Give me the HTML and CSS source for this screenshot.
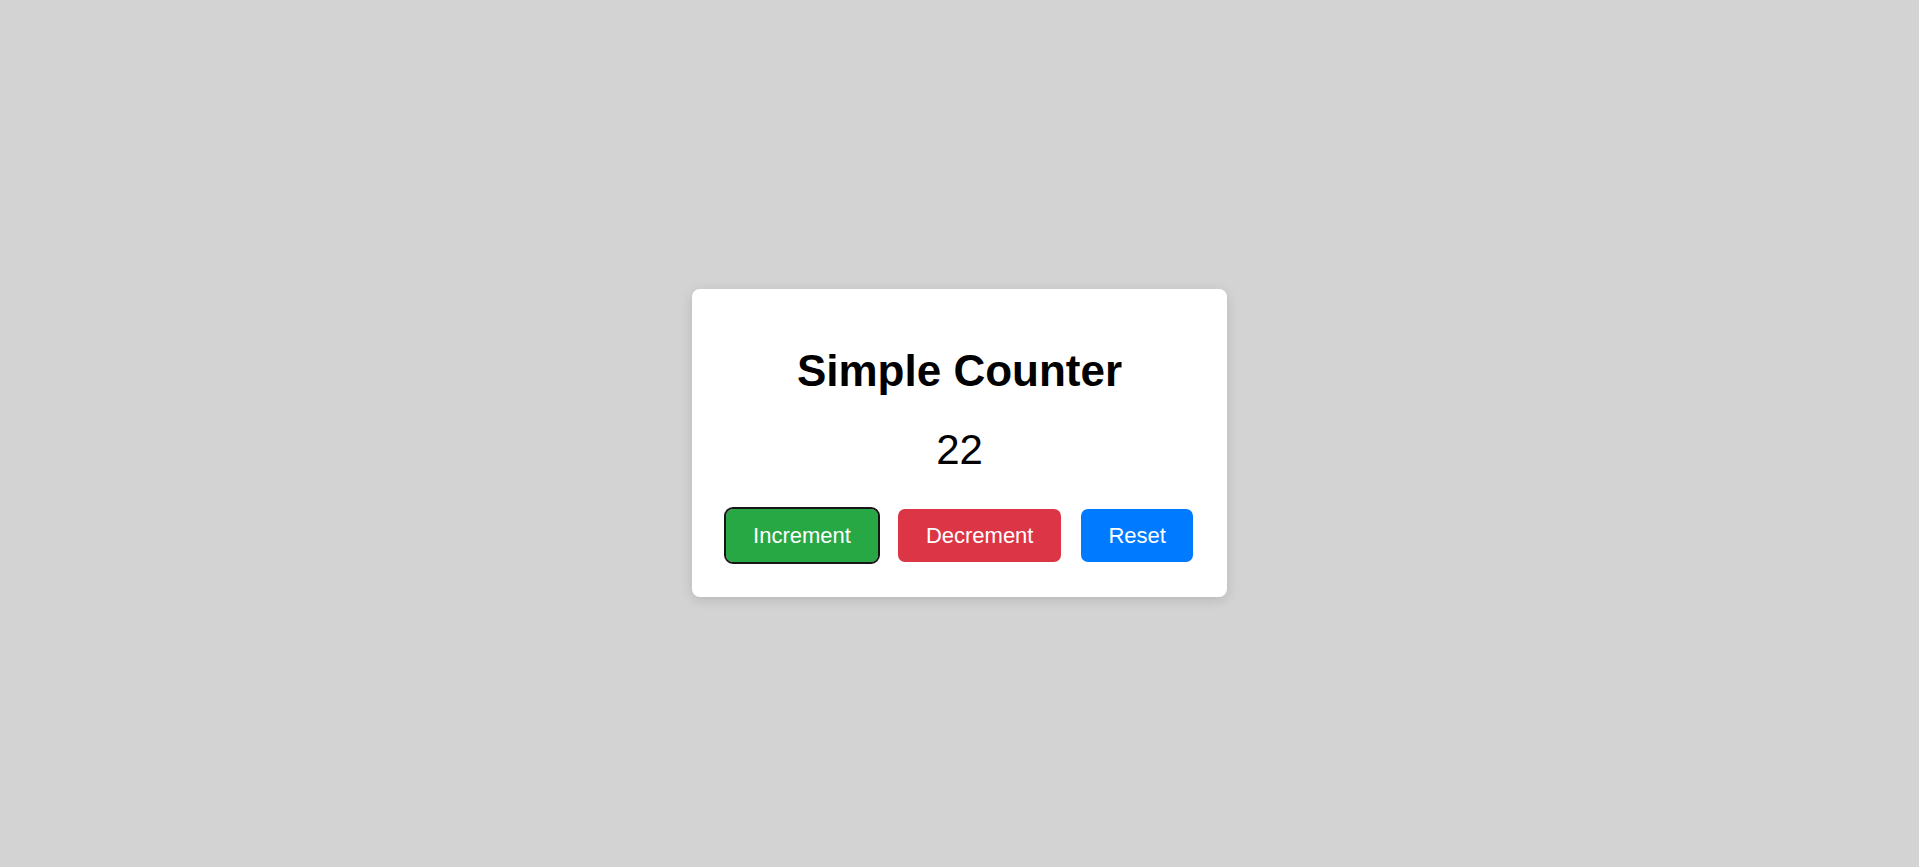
FILE: index.html
```html
<!DOCTYPE html>
<html lang="en">
<head>
<meta charset="utf-8">
<title>Simple Counter</title>
<link rel="stylesheet" href="styles.css">
</head>
<body>
  <div class="card">
    <h1 class="title">Simple Counter</h1>
    <div class="count">22</div>
    <div class="actions">
      <button class="btn btn-inc is-focused">Increment</button>
      <button class="btn btn-dec">Decrement</button>
      <button class="btn btn-reset">Reset</button>
    </div>
  </div>
</body>
</html>
```

FILE: styles.css
```css
html, body {
  margin: 0;
  padding: 0;
}

body {
  background: #d3d3d3;
  font-family: "Liberation Sans", Arial, sans-serif;
  height: 100vh;
  box-sizing: border-box;
  padding-top: 19px;
  display: flex;
  align-items: center;
  justify-content: center;
}

.card {
  background: #ffffff;
  border-radius: 8px;
  box-shadow: 0 3px 12px rgba(0, 0, 0, 0.13);
  padding: 28px 34px 35px;
  text-align: center;
}

.title {
  margin: 28px 0 30px;
  font-size: 44px;
  line-height: 51px;
  font-weight: bold;
  color: #000;
}

.count {
  font-size: 42px;
  line-height: 48px;
  color: #000;
  margin-bottom: 35px;
}

.actions {
  display: flex;
  gap: 20px;
  justify-content: center;
}

.btn {
  font-family: "Liberation Sans", Arial, sans-serif;
  font-size: 22px;
  line-height: 25px;
  padding: 14px 27.5px;
  border: none;
  border-radius: 7px;
  color: #fff;
  cursor: pointer;
}

.btn-inc { background: #28a745; }
.btn-dec { background: #dc3545; }
.btn-reset { background: #007bff; }

.is-focused {
  outline: 2.5px solid #161616;
  outline-offset: 0;
}
```
